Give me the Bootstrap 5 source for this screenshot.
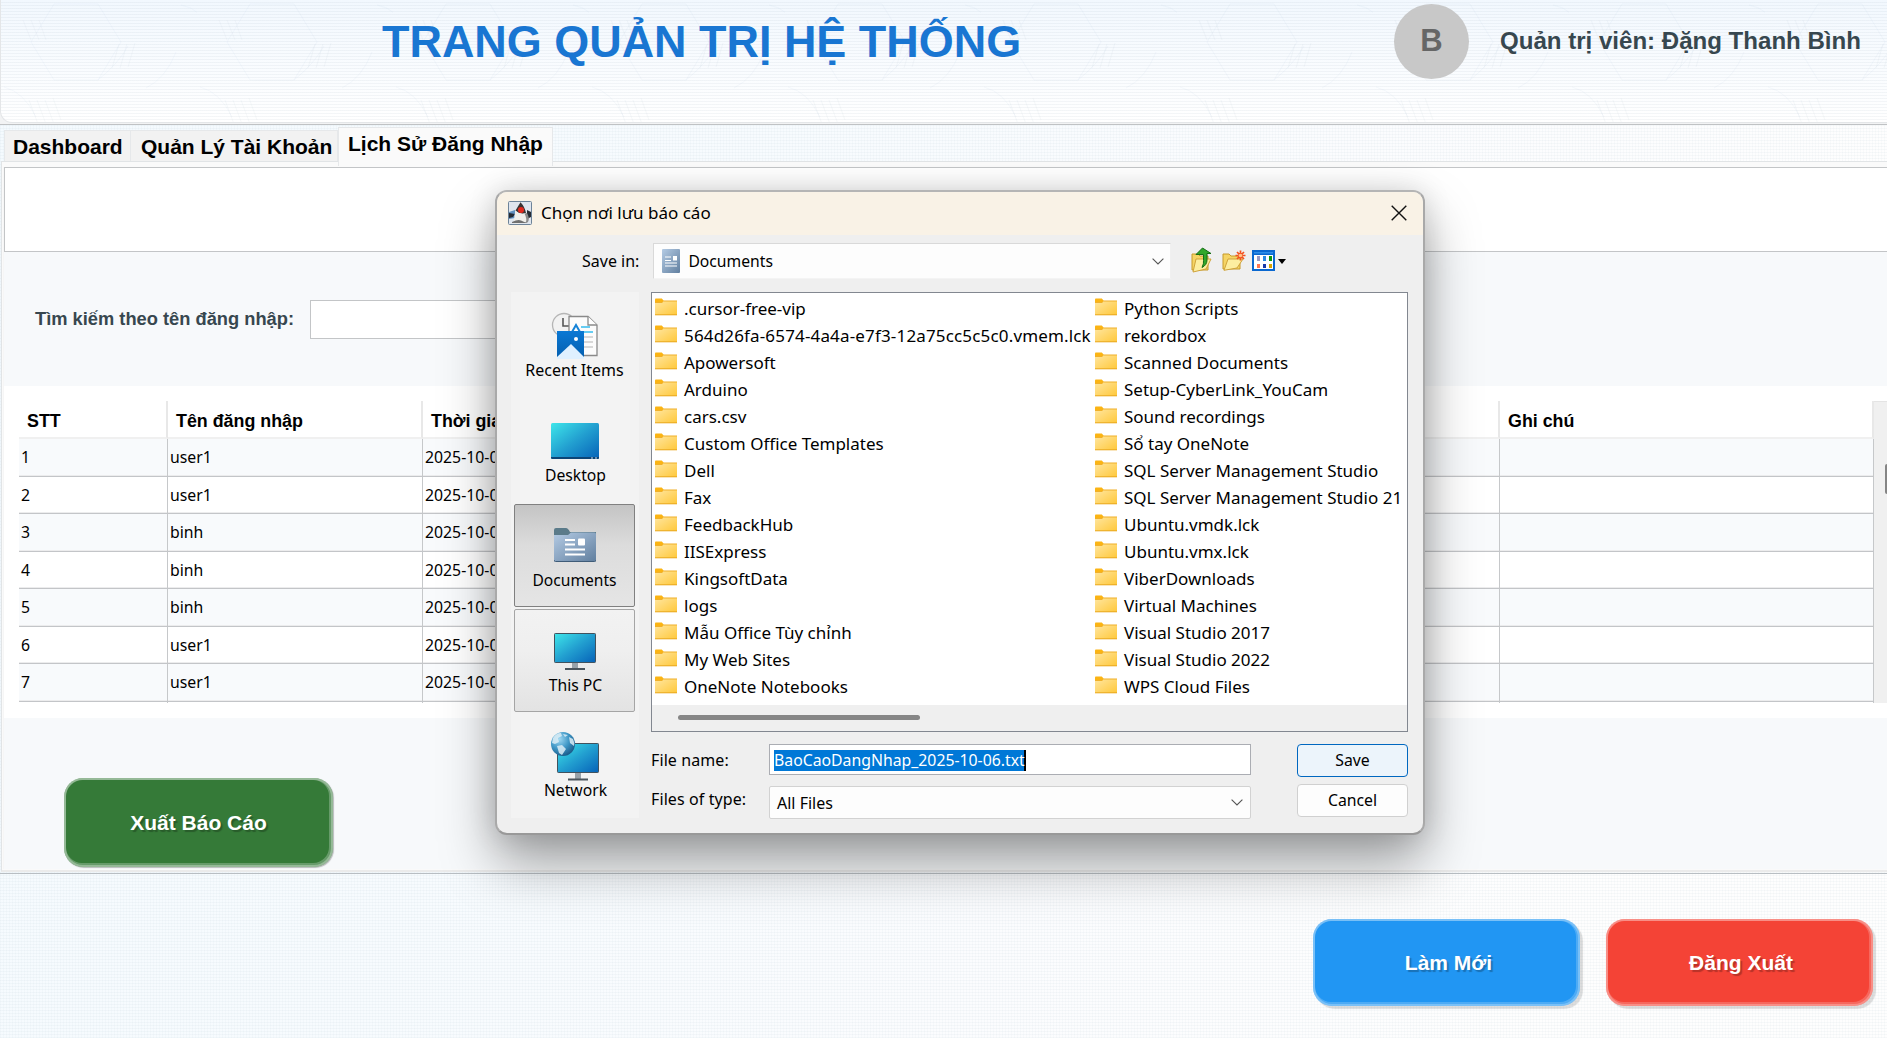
<!DOCTYPE html>
<html lang="vi">
<head>
<meta charset="utf-8">
<title>Trang quản trị hệ thống</title>
<link href="https://cdn.jsdelivr.net/npm/bootstrap@5.3.0/dist/css/bootstrap.min.css" rel="stylesheet">
<style>
html,body{height:1038px;overflow:hidden}
body{width:1887px;font-family:"Liberation Sans",Arial,sans-serif;color:#000;position:relative;
  background:repeating-linear-gradient(0deg,rgba(130,160,175,.06) 0 1px,transparent 1px 3px),repeating-linear-gradient(90deg,rgba(130,160,175,.045) 0 1px,transparent 1px 3px),linear-gradient(115deg,#f4fafe 0,#f7fbfe 35%,#fbfcfe 60%,#fefefe 85%)}
.topbar{height:125px;border-bottom:1px solid #c0c2c4;background:#f2f3f4;flex:none}
.topbar-in{height:123px;border-radius:0 0 0 12px;border:solid #e4e6e8;border-width:0 0 1px 1px;position:relative;overflow:hidden;
  background:repeating-linear-gradient(0deg,transparent 0 2px,rgba(120,140,160,.08) 2px 3px),linear-gradient(#f2f8fe,#fff)}
.hexes{position:absolute;inset:0;width:100%;height:100%;opacity:.55}
.topbar h1{font-size:44.95px;line-height:50px;font-weight:700;color:#1976d2;padding-left:381px;padding-top:17px;width:1393px;white-space:nowrap}
.avatar{width:75px;height:75px;margin-top:4px;background:#c8c8c8;color:#666;font-weight:700;font-size:31px}
.who{font-size:24.07px;line-height:28px;font-weight:700;color:#37474f;margin:27px 0 0 31px;white-space:nowrap}
.tabstrip{height:36px;flex:none;padding-left:4px;font-weight:700;font-size:21px;line-height:24px;white-space:nowrap}
.tabstrip>div{background:#f2f2f2;border:1px solid #e6e8ea;border-bottom:0;height:32px;margin-top:5px;padding:4px 8px 0 8px}
.tabstrip>div:nth-child(1){width:127px}
.tabstrip>div:nth-child(2){width:207px;border-left:0;padding-left:10px}
.tabstrip>div.sel{width:215px;height:39px;margin-top:2px;background:#fafafa;padding:4px 0 0 9px;position:relative}
.pane{height:711px;flex:none;margin-left:1px;border:1px solid #e1e4e6;border-right:0;border-bottom:2px solid #ebebeb;background:#fafafa;padding:5px 0 0 1px}
.inner{height:702px;border-left:1px solid #f6f6f6;background:#f7f9fb}
.blank{height:85px;background:#fff;border:1px solid #c3c5c7;border-right:0}
.search{height:134px;padding-left:31px;color:#37474f}
.search label{font-size:18.3px;font-weight:700;width:275px}
.search .form-control{width:520px;height:39px;border:1px solid #c3c5c7;border-radius:0}
.tbl-wrap{height:332px;background:#fff;padding:15px 0 0 15px}
.tbl-clip{height:302px;overflow:hidden;width:1855px;flex:none}
.logs{table-layout:fixed;width:1855px;border-collapse:separate;border-spacing:0;margin:0;font-family:"Noto Sans","Open Sans",sans-serif;font-size:15.8px}
.logs th{height:38px;border-right:2px solid #e8e8e8;border-bottom:2px solid #f0f0f0;padding:4px 0 0 8px;font:700 17.85px "Liberation Sans",Arial,sans-serif;vertical-align:middle}
.logs td{height:37.53px;padding:0 0 0 2px;border-right:1px solid #c6c8ca;border-bottom:1px solid #c3c5c8;box-shadow:inset 0 -1px #ececed;vertical-align:middle;line-height:20px}
.logs tbody tr:nth-child(odd) td{background:#f8fafc}
.vscroll{width:15px;background:#f0f0f0;border-top:1px solid #e4e4e4;height:302px;padding:62px 0 0 11px}
.vscroll div{width:3px;height:30px;background:#858585;border-radius:2px 0 0 2px}
.act{padding:60px 0 0 60px}
.bigbtn{width:267px;height:87px;border-radius:19px;color:#fff!important;font-weight:700;font-size:21px;text-shadow:2px 2px 1px rgba(0,0,0,.25);border:0;box-shadow:inset 0 0 0 2px rgba(255,255,255,.25),inset -1px -1px 0 3px rgba(255,255,255,.2),3px 3px 1px rgba(0,0,0,.13)}
.b-green{background:#357a38!important;width:269px;height:89px;box-shadow:inset 0 0 0 2px rgba(255,255,255,.3),inset -1px -1px 0 3px rgba(255,255,255,.25),1px 1px 1px rgba(0,0,0,.25)}
.b-blue{background:#2196f3!important;padding-left:16px}.b-red{background:#f44336!important;padding-left:15px}
.foot{border-top:1px solid #b8bec3;margin-top:1px;padding:45px 14px 0 0;gap:26px}
/* save dialog */
.dlg{position:absolute;left:495px;top:190px;width:930px;height:645px;border:2px solid #b5b5b5;border-color:#b5b5b5 #a9a9a9 #999;border-radius:12px;background:#efefef;box-shadow:0 28px 54px rgba(0,0,0,.36),0 0 28px rgba(0,0,0,.13);font-family:"Noto Sans","Open Sans",sans-serif;font-size:16px;line-height:22px;white-space:nowrap}
.dlg-title{height:43px;background:#f9f2e6;border-radius:10px 10px 0 0;font-size:17px;padding:0 16px 2px 11px}
.dlg svg{display:block;flex:none}
.lookin{height:57px;padding:8px 0 0 85px}
.lookin .pick{width:518px;height:36px;background:#fdfdfd;border:1px solid #d9d9d9;border-bottom-color:#f4f4f4;border-right-color:#f0f0f0;margin-left:14px;padding:0 9px 0 8px}
.places{width:128px;height:526px;background:#f3f3f3;margin-left:14px;padding:2px 4px 0 3px;text-align:center}
.place{height:103px;margin-bottom:2px;border:1px solid transparent;border-radius:2px;display:flex;flex-direction:column;align-items:center;width:121px}
.place span{line-height:20px}
.place.on{border-color:#808080;background:linear-gradient(#c4c4c4,#cfcfcf 18%,#dcdcdc 40%,#e5e5e5)}
.place.hov{border-color:#a5a5a5;background:linear-gradient(#f2f2f2,#efefef 40%,#e3e3e3)}
.files{width:757px;height:440px;border:1px solid #828790;background:#fff;margin-left:12px}
.flist{height:412px;padding:3px 0 0 3px;font-size:17px}
.flist>div:first-child{width:440px}
.f{height:27px;display:flex;line-height:25px}
.f svg{margin:2px 7px 0 0}
.hscroll{height:26px;background:#efefef;padding:10px 0 0 26px}
.hscroll div{width:242px;height:5px;border-radius:3px;background:#868686}
.fields{margin-left:12px;width:757px;padding-top:12px}
.fields .lab{width:118px;letter-spacing:.1px}
.fname{width:482px;height:31px;border:1px solid #abadb3;background:#fff;padding:5px 4px}
.fname span{background:#0078d7;color:#fff;line-height:21px;height:21px;border-right:2px solid #000;font-size:15.8px;display:block;width:252px}
.ftype{width:482px;height:33px;border:1px solid #d2d2d2;border-radius:2px;background:#fdfdfd;padding:0 7px}
.dbtn{width:111px;height:33px;border-radius:4px;font:15.8px/20px "Noto Sans","Open Sans",sans-serif;padding:0 0 2px;color:#000;border:1px solid #d0d0d0;background:#fdfdfd;display:block}
.dbtn.def{border-color:#0067c0;background:#ecf4fb;margin-bottom:7px}
</style>
</head>
<body class="d-flex flex-column">
<svg width="0" height="0" class="position-absolute" aria-hidden="true">
<defs>
<linearGradient id="gf" x1="0" y1="0" x2="1" y2="1"><stop offset="0" stop-color="#ffe6a0"/><stop offset="1" stop-color="#ffc83a"/></linearGradient>
<linearGradient id="gs" x1="0" y1="0" x2="1" y2="1"><stop offset="0" stop-color="#3ee6ea"/><stop offset=".5" stop-color="#229fd0"/><stop offset="1" stop-color="#0662b8"/></linearGradient>
<linearGradient id="gd" x1="0" y1="0" x2="1" y2="1"><stop offset="0" stop-color="#b4cbe4"/><stop offset="1" stop-color="#617f9f"/></linearGradient>
<linearGradient id="gp" x1="0" y1="0" x2="0" y2="1"><stop offset="0" stop-color="#0a78d4"/><stop offset="1" stop-color="#0560b0"/></linearGradient>
<radialGradient id="gg" cx=".35" cy=".3" r=".8"><stop offset="0" stop-color="#9fd8f2"/><stop offset=".5" stop-color="#3f97c6"/><stop offset="1" stop-color="#14507f"/></radialGradient>
<symbol id="fold" viewBox="0 0 22 18"><path d="M0 1.2Q0 .5.8.5h6L8.5 2.5V5H0z" fill="#fbb414"/><path d="M0 4.6h7.2L8.7 3H22v14H0z" fill="url(#gf)"/><path d="M8.5 2.6H22v1H8.1L7 4.9H0v-.8h6.8z" fill="#f0b02a"/><path d="M0 16.3h22v1H0z" fill="#e9a820"/></symbol>
<symbol id="chev" viewBox="0 0 12 7"><path d="M.6.6 6 6 11.4.6" fill="none" stroke="#555" stroke-width="1.1"/></symbol>
<pattern id="hx" width="196" height="160" patternUnits="userSpaceOnUse"><path d="M53 4h44l23 38-23 38H53L30 42zM3 87q20 5 32 30M180 5q20 3 34 30M145 88q20-10 30-36M97 80q20-16 30-34" fill="none" stroke="#8fb4d4" stroke-opacity=".13"/><path d="M28 100l9 24M36 100l9 24M44 100l9 24M52 98l8 22M118 44l-7 24M126 44l-7 24M134 43l-7 24M22 20l8 20M30 20l8 20M38 20l7 20" stroke="#8fa4b4" stroke-opacity=".12" fill="none"/></pattern>
</defs>
</svg>

<header class="topbar">
  <div class="topbar-in d-flex align-items-start">
    <svg class="hexes"><rect width="100%" height="100%" fill="url(#hx)"/></svg>
    <h1 class="m-0 position-relative">TRANG QUẢN TRỊ HỆ THỐNG</h1>
    <div class="avatar rounded-circle d-flex align-items-center justify-content-center position-relative">B</div>
    <div class="who position-relative">Quản trị viên: Đặng Thanh Bình</div>
  </div>
</header>

<nav class="tabstrip d-flex">
  <div>Dashboard</div><div>Quản Lý Tài Khoản</div><div class="sel">Lịch Sử Đăng Nhập</div>
</nav>

<main class="pane">
  <div class="inner">
    <div class="blank"></div>
    <div class="search d-flex align-items-center">
      <label for="q">Tìm kiếm theo tên đăng nhập:</label>
      <input id="q" class="form-control">
    </div>
    <div class="tbl-wrap d-flex">
      <div class="tbl-clip">
        <table class="logs">
          <colgroup><col style="width:149px"><col style="width:255px"><col style="width:500px"><col style="width:577px"><col></colgroup>
          <thead><tr><th>STT</th><th>Tên đăng nhập</th><th>Thời gian</th><th></th><th>Ghi chú</th></tr></thead>
          <tbody>
          <tr><td>1</td><td>user1</td><td>2025-10-06</td><td></td><td></td></tr>
          <tr><td>2</td><td>user1</td><td>2025-10-06</td><td></td><td></td></tr>
          <tr><td>3</td><td>binh</td><td>2025-10-06</td><td></td><td></td></tr>
          <tr><td>4</td><td>binh</td><td>2025-10-06</td><td></td><td></td></tr>
          <tr><td>5</td><td>binh</td><td>2025-10-06</td><td></td><td></td></tr>
          <tr><td>6</td><td>user1</td><td>2025-10-06</td><td></td><td></td></tr>
          <tr><td>7</td><td>user1</td><td>2025-10-06</td><td></td><td></td></tr>
          <tr><td></td><td></td><td></td><td></td><td></td></tr>
          </tbody>
        </table>
      </div>
      <div class="vscroll"><div></div></div>
    </div>
    <div class="act"><button class="btn bigbtn b-green">Xuất Báo Cáo</button></div>
  </div>
</main>

<footer class="foot d-flex justify-content-end align-items-start flex-grow-1">
  <button class="btn bigbtn b-blue">Làm Mới</button>
  <button class="btn bigbtn b-red">Đăng Xuất</button>
</footer>

<section class="dlg">
  <div class="dlg-title d-flex align-items-center">
    <svg width="24" height="24" viewBox="0 0 24 24"><rect x=".5" y=".5" width="23" height="23" rx="1" fill="#dfe5ee" stroke="#6d8399"/><path d="M1 11l6-2v8l-6 1z" fill="#5f8fc0"/><path d="M1 12l6 1-2 3-4 1zM19 9l4 2v5l-4 2z" fill="#252a33"/><path d="M12.500 1.200 7.500 9.500q5 5 10.500 2.500-1-6-5.500-10.800z" fill="#3a3434"/><path d="M7.500 10q5 4 10.500 2 3 5 1.500 8-1 3-3 2-3-1-6 .5-4 1-4.500-2Q6 15 7.500 10z" fill="#f0eeea"/><path d="M16.500 12.500q3 6 1 9.500l2.500-1q2-4-1-9z" fill="#8c8c8c"/><path d="M4 21q6-3 9-1.500t7 2.500H4z" fill="#6f6f6f"/><circle cx="13" cy="9" r="3" fill="#e32a1e"/></svg>
    <span style="margin-left:9px">Chọn nơi lưu báo cáo</span>
    <svg class="ms-auto" width="16" height="16" viewBox="0 0 16 16"><path d="M.7.700l14.600 14.600M15.300.700.700 15.300" stroke="#111" stroke-width="1.400"/></svg>
  </div>
  <div class="lookin d-flex">
    <span style="margin-top:7px">Save in:</span>
    <div class="pick d-flex align-items-center">
      <svg width="18" height="24" viewBox="0 0 18 24"><rect width="18" height="24" rx="1" fill="url(#gd)"/><path d="M3 8h6M3 11.500h6M3 14h12M3 17h12" stroke="#fff" stroke-width="1.100"/><rect x="11" y="7" width="4" height="4.500" fill="#fff"/></svg>
      <span style="margin-left:8px;font-size:15.700px">Documents</span>
      <svg class="ms-auto" style="margin-right:-3px" width="12" height="7"><use href="#chev"/></svg>
    </div>
    <svg style="margin:4px 0 0 20px" width="22" height="26" viewBox="0 0 22 26"><path d="M1 7h6l2 2h8v14H1z" fill="#f5d465" stroke="#c79a2b"/><path d="M5 12h15l-5 10-13 3z" fill="#fdeea0" stroke="#cfa33a"/><path d="M5 7.500 11.500 1 20 6.500h-4V13q0 5-5 7.500 2-4 1.500-7V7.500z" fill="#31a72a" stroke="#146d14"/></svg>
    <svg style="margin:7px 0 0 9px" width="24" height="21" viewBox="0 0 24 21"><path d="M1 4h6l2 2h9v13H1z" fill="#f5d465" stroke="#c79a2b"/><path d="M6 9h15l-6 9-13 2.300z" fill="#fdeea0" stroke="#cfa33a"/><path d="M18.500.500v10M13.500 5.500h10M15 2l7 7M22 2l-7 7" stroke="#f4511e" stroke-width="1.700"/><circle cx="18.500" cy="5.500" r="1.800" fill="#ffc48a"/></svg>
    <svg style="margin:7px 0 0 6px" width="34" height="22" viewBox="0 0 34 22"><path d="M0 0h23v21H0z" fill="#0a68d0"/><path d="M2 5h19v14H2z" fill="#fff"/><path d="M2 2h19v1.500H2z" fill="#2f8ee8"/><path d="M5 6h3v5H5z" fill="#9a9ac4"/><path d="M11 6h3v5h-3z" fill="#2a8ae0"/><path d="M17 6h3v5h-3z" fill="#0d970d"/><path d="M5 14h3v4H5z" fill="#ff7650"/><path d="M11 14h3v4h-3z" fill="#1a3aa8"/><path d="M17 14h3v4h-3z" fill="#d9a300"/><path d="M26 9h8l-4 5z" fill="#000"/></svg>
  </div>
  <div class="d-flex">
    <div class="places">
      <div class="place">
        <svg style="margin-top:15px" width="48" height="50" viewBox="0 0 48 50"><circle cx="13" cy="15" r="11.500" fill="#f2f2f2" stroke="#b5b5b5" stroke-width="1.300"/><path d="M12 8v8h6" fill="none" stroke="#555" stroke-width="1.600"/><path d="M18 6.500h19L46 15v30.500H18z" fill="#fcfcfc" stroke="#8a8a8a" stroke-width="1.300"/><path d="M37 6.500V15h9" fill="#fff" stroke="#8a8a8a" stroke-width="1.300"/><path d="M30 17h9M33 22h9" stroke="#35bdf0" stroke-width="1.500"/><path d="M33 27h9M33 32h9M33 37h9" stroke="#ccc" stroke-width="1.300"/><path d="m21 22 4-7 4 7" fill="none" stroke="#1583d8" stroke-width="2"/><path d="M6 21h27v26H6z" fill="url(#gp)"/><path d="M6 47 20 34l13 13v2H6z" fill="#dff0ff"/><circle cx="25" cy="29" r="2" fill="#fff"/></svg>
        <span>Recent Items</span>
      </div>
      <div class="place">
        <svg style="margin-top:23px" width="48" height="36" viewBox="0 0 48 36"><rect width="48" height="36" rx="1.500" fill="url(#gs)"/><path d="M0 34h48v.5q0 1.500-1.500 1.500h-45Q0 36 0 34.500z" fill="#0c4476"/><path d="M40 35h2M44 35h2" stroke="#cde" stroke-width="1.200"/></svg>
        <span style="margin-top:6px;padding-left:2px;font-size:15.700px">Desktop</span>
      </div>
      <div class="place on">
        <svg style="margin-top:23px" width="42" height="34" viewBox="0 0 42 34"><path d="M0 2Q0 0 2 0h10q2 0 4 4H42v5H0z" fill="#5b7b8a"/><path d="M0 7h14l3-2.500h23.500Q42 4.500 42 6v26q0 1.500-1.500 1.500h-39Q0 33.500 0 32z" fill="url(#gd)"/><path d="M0 32q0 1.500 1.500 1.500h39Q42 33.500 42 32" fill="none" stroke="#3f5c78"/><path d="M11 12h10M11 16.500h10M11 21.500h20M11 26.500h20" stroke="#fff" stroke-width="2"/><rect x="24" y="10.500" width="7" height="7" rx="1" fill="#fff"/></svg>
        <span style="margin-top:8px;font-size:15.600px">Documents</span>
      </div>
      <div class="place hov">
        <svg style="margin-top:23px" width="42" height="37" viewBox="0 0 42 37"><path d="M18 30h6v6h-6z" fill="#98a2aa"/><rect x="11" y="35" width="20" height="2" fill="#4a545c"/><rect x=".5" y=".5" width="41" height="29" rx=".8" fill="url(#gs)" stroke="#41525e"/></svg>
        <span style="margin-top:5px;padding-left:2px;font-size:15.700px">This PC</span>
      </div>
      <div class="place">
        <svg style="margin-top:17px" width="48" height="49" viewBox="0 0 48 49"><path d="M24 41h6v6h-6z" fill="#98a2aa"/><rect x="17" y="46.500" width="20" height="2" fill="#4a545c"/><rect x="6.500" y="11.500" width="41" height="29" rx=".8" fill="url(#gs)" stroke="#41525e"/><circle cx="12" cy="12" r="12" fill="url(#gg)"/><path d="M2 6q3-5 8-5l1 3-4 2 1 4-4 2-3-1zM12 2l5 1-3 2zM18 5l4 2q2 4 1 7l-4-3zM6 14l5-1 4 4-4 6-3-2z" fill="#dcedf6" fill-opacity=".85"/></svg>
        <span style="margin-top:-1px;padding-left:2px;font-size:15.700px">Network</span>
      </div>
    </div>
    <div>
      <div class="files">
        <div class="flist d-flex">
          <div>
            <div class="f"><svg width="22" height="18"><use href="#fold"/></svg>.cursor-free-vip</div>
            <div class="f" style="letter-spacing:.16px"><svg width="22" height="18"><use href="#fold"/></svg>564d26fa-6574-4a4a-e7f3-12a75cc5c5c0.vmem.lck</div>
            <div class="f"><svg width="22" height="18"><use href="#fold"/></svg>Apowersoft</div>
            <div class="f"><svg width="22" height="18"><use href="#fold"/></svg>Arduino</div>
            <div class="f"><svg width="22" height="18"><use href="#fold"/></svg>cars.csv</div>
            <div class="f"><svg width="22" height="18"><use href="#fold"/></svg>Custom Office Templates</div>
            <div class="f"><svg width="22" height="18"><use href="#fold"/></svg>Dell</div>
            <div class="f"><svg width="22" height="18"><use href="#fold"/></svg>Fax</div>
            <div class="f"><svg width="22" height="18"><use href="#fold"/></svg>FeedbackHub</div>
            <div class="f"><svg width="22" height="18"><use href="#fold"/></svg>IISExpress</div>
            <div class="f"><svg width="22" height="18"><use href="#fold"/></svg>KingsoftData</div>
            <div class="f"><svg width="22" height="18"><use href="#fold"/></svg>logs</div>
            <div class="f"><svg width="22" height="18"><use href="#fold"/></svg>Mẫu Office Tùy chỉnh</div>
            <div class="f"><svg width="22" height="18"><use href="#fold"/></svg>My Web Sites</div>
            <div class="f"><svg width="22" height="18"><use href="#fold"/></svg>OneNote Notebooks</div>
          </div>
          <div>
            <div class="f"><svg width="22" height="18"><use href="#fold"/></svg>Python Scripts</div>
            <div class="f"><svg width="22" height="18"><use href="#fold"/></svg>rekordbox</div>
            <div class="f"><svg width="22" height="18"><use href="#fold"/></svg>Scanned Documents</div>
            <div class="f"><svg width="22" height="18"><use href="#fold"/></svg>Setup-CyberLink_YouCam</div>
            <div class="f"><svg width="22" height="18"><use href="#fold"/></svg>Sound recordings</div>
            <div class="f"><svg width="22" height="18"><use href="#fold"/></svg>Sổ tay OneNote</div>
            <div class="f"><svg width="22" height="18"><use href="#fold"/></svg>SQL Server Management Studio</div>
            <div class="f"><svg width="22" height="18"><use href="#fold"/></svg>SQL Server Management Studio 21</div>
            <div class="f"><svg width="22" height="18"><use href="#fold"/></svg>Ubuntu.vmdk.lck</div>
            <div class="f"><svg width="22" height="18"><use href="#fold"/></svg>Ubuntu.vmx.lck</div>
            <div class="f"><svg width="22" height="18"><use href="#fold"/></svg>ViberDownloads</div>
            <div class="f"><svg width="22" height="18"><use href="#fold"/></svg>Virtual Machines</div>
            <div class="f"><svg width="22" height="18"><use href="#fold"/></svg>Visual Studio 2017</div>
            <div class="f"><svg width="22" height="18"><use href="#fold"/></svg>Visual Studio 2022</div>
            <div class="f"><svg width="22" height="18"><use href="#fold"/></svg>WPS Cloud Files</div>
          </div>
        </div>
        <div class="hscroll"><div></div></div>
      </div>
      <div class="fields d-flex">
        <div>
          <div class="d-flex"><div class="lab" style="padding-top:5px">File name:</div><div class="fname"><span>BaoCaoDangNhap_2025-10-06.txt</span></div></div>
          <div class="d-flex" style="margin-top:11px"><div class="lab" style="padding-top:2px">Files of type:</div><div class="ftype d-flex align-items-center"><span>All Files</span><svg class="ms-auto" width="12" height="7"><use href="#chev"/></svg></div></div>
        </div>
        <div class="ms-auto"><button class="btn dbtn def">Save</button><button class="btn dbtn">Cancel</button></div>
      </div>
    </div>
  </div>
</section>
<script src="https://cdn.jsdelivr.net/npm/bootstrap@5.3.0/dist/js/bootstrap.bundle.min.js"></script>
</body>
</html>
